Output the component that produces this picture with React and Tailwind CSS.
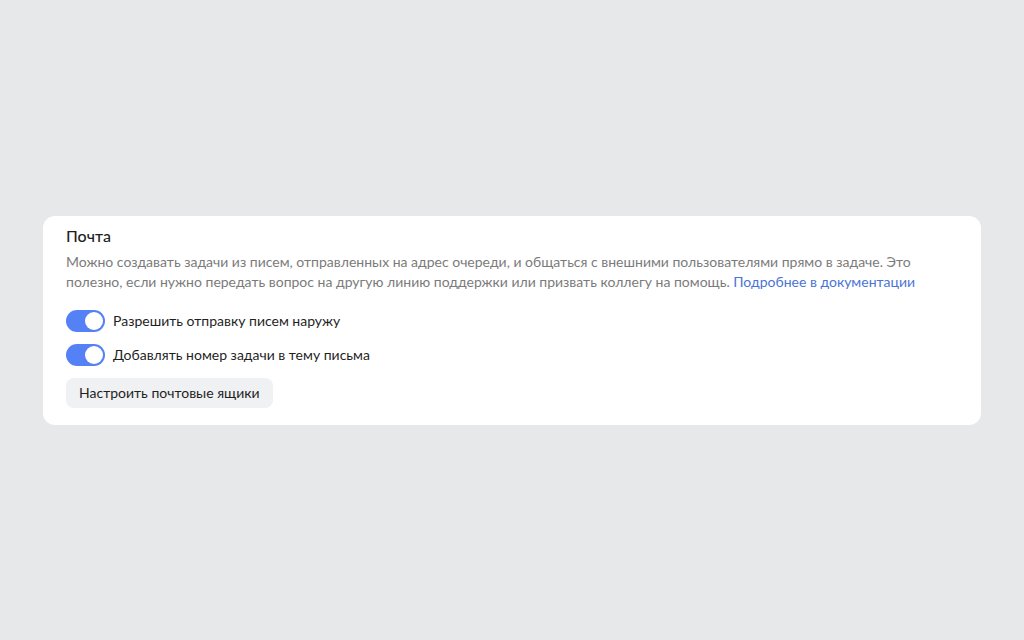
import React, { useState } from 'react';

function Toggle({ checked, onChange, children }) {
  return (
    <label className="flex items-center gap-2 cursor-pointer select-none">
      <button
        type="button"
        onClick={() => onChange(!checked)}
        className={`relative w-[39px] h-[22px] rounded-full transition-colors ${
          checked ? 'bg-[#5482f6]' : 'bg-[#d4d5d8]'
        }`}
      >
        <span
          className={`absolute top-[2px] left-[2px] w-[18px] h-[18px] bg-white rounded-full transition-transform ${
            checked ? 'translate-x-[17px]' : ''
          }`}
        />
      </button>
      <span className="text-[14px] leading-5 text-[#1f1f1f]">{children}</span>
    </label>
  );
}

export default function App() {
  const [allowOutgoing, setAllowOutgoing] = useState(true);
  const [addIssueKey, setAddIssueKey] = useState(true);

  return (
    <div
      className="min-h-[640px] bg-[#e7e8ea] flex items-center px-[43px]"
      style={{ fontFamily: 'Lato, "Noto Sans", sans-serif' }}
    >
      <div className="w-full bg-white rounded-xl pl-[23px] pr-6 pt-[10px] pb-[17px]">
        <h2 className="text-[16px] leading-5 font-medium text-[#1f1f1f]">Почта</h2>
        <p className="mt-[6px] text-[14px] leading-5 text-[#7b7b7b]">
          Можно создавать задачи из писем, отправленных на адрес очереди, и общаться с внешними пользователями прямо в задаче. Это
          <br />
          полезно, если нужно передать вопрос на другую линию поддержки или призвать коллегу на помощь.{' '}
          <a href="#" className="text-[#4a74d6]">Подробнее в документации</a>
        </p>
        <div className="mt-[18px] flex flex-col gap-3">
          <Toggle checked={allowOutgoing} onChange={setAllowOutgoing}>
            Разрешить отправку писем наружу
          </Toggle>
          <Toggle checked={addIssueKey} onChange={setAddIssueKey}>
            Добавлять номер задачи в тему письма
          </Toggle>
        </div>
        <button
          type="button"
          className="mt-3 h-[30px] px-[13px] rounded-lg bg-[#f0f1f2] text-[14px] text-[#1f1f1f]"
        >
          Настроить почтовые ящики
        </button>
      </div>
    </div>
  );
}
